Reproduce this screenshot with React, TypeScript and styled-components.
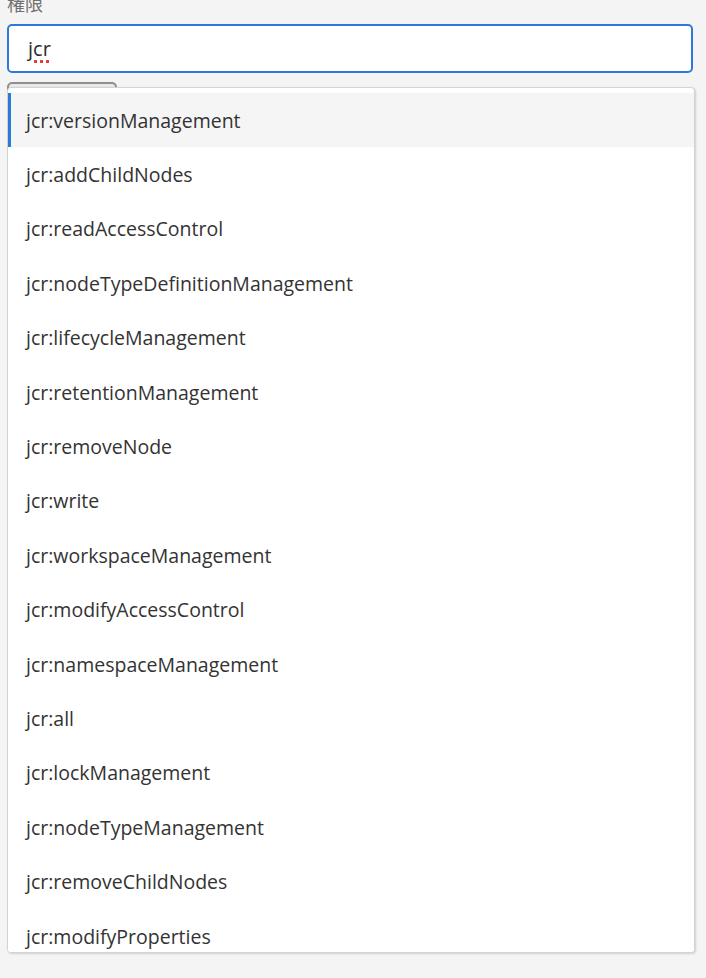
import styled, { createGlobalStyle } from 'styled-components'

const GlobalStyle = createGlobalStyle`
  html, body {
    margin: 0;
    padding: 0;
    background: #f4f4f4;
    font-family: 'Open Sans', 'Noto Sans CJK JP', sans-serif;
    overflow: hidden;
  }
`

const privileges = [
  'jcr:versionManagement',
  'jcr:addChildNodes',
  'jcr:readAccessControl',
  'jcr:nodeTypeDefinitionManagement',
  'jcr:lifecycleManagement',
  'jcr:retentionManagement',
  'jcr:removeNode',
  'jcr:write',
  'jcr:workspaceManagement',
  'jcr:modifyAccessControl',
  'jcr:namespaceManagement',
  'jcr:all',
  'jcr:lockManagement',
  'jcr:nodeTypeManagement',
  'jcr:removeChildNodes',
  'jcr:modifyProperties',
]

function App() {
  return (
    <Page>
      <GlobalStyle />
      <Label>権限</Label>
      <Field>
        <Misspelled>jcr</Misspelled>
      </Field>
      <Stack>
        <HiddenButton />
        <Menu>
          {privileges.map((p, i) => (
            <Item key={p} $active={i === 0}>
              {p}
            </Item>
          ))}
        </Menu>
      </Stack>
    </Page>
  )
}

export default App

const Page = styled.div`
  height: 978px;
  padding: 0 13px 0 7px;
  box-sizing: border-box;
  display: flex;
  flex-direction: column;
`

const Label = styled.div`
  font-size: 18px;
  line-height: 18px;
  margin-top: -5px;
  color: #707070;
  height: 29px;
`

const Field = styled.div`
  height: 49px;
  box-sizing: border-box;
  border: 2px solid #2a7bd8;
  border-radius: 5px;
  background: #fff;
  display: flex;
  align-items: center;
  padding: 0 0 0 19px;
  font-size: 20px;
  color: #2c2c2c;
`

const Misspelled = styled.span`
  text-decoration: underline dotted #e0403a;
  text-decoration-thickness: 3px;
  text-underline-offset: 4px;
`

const Stack = styled.div`
  position: relative;
  margin-top: 9px;
  flex: 0 0 871px;
`

const HiddenButton = styled.div`
  position: absolute;
  left: 0;
  top: 0;
  width: 110px;
  height: 30px;
  border: 2px solid #8f8f8f;
  border-radius: 5px;
  box-sizing: border-box;
  background: #e9e9e9;
`

const Menu = styled.div`
  position: absolute;
  left: 0;
  right: -2px;
  top: 5px;
  bottom: 0;
  background: #fff;
  border: 1px solid #d3d3d3;
  border-radius: 4px;
  box-shadow: 1px 1px 2px rgba(0, 0, 0, 0.15);
  padding-top: 5px;
  overflow: hidden;
`

const Item = styled.div<{ $active?: boolean }>`
  height: 54.4px;
  box-sizing: border-box;
  display: flex;
  align-items: center;
  padding-left: ${(p) => (p.$active ? '15px' : '18px')};
  border-left: ${(p) => (p.$active ? '3px solid #2a7bd8' : 'none')};
  background: ${(p) => (p.$active ? '#f5f5f5' : '#fff')};
  font-size: 19.5px;
  color: #333;
  white-space: nowrap;
`
